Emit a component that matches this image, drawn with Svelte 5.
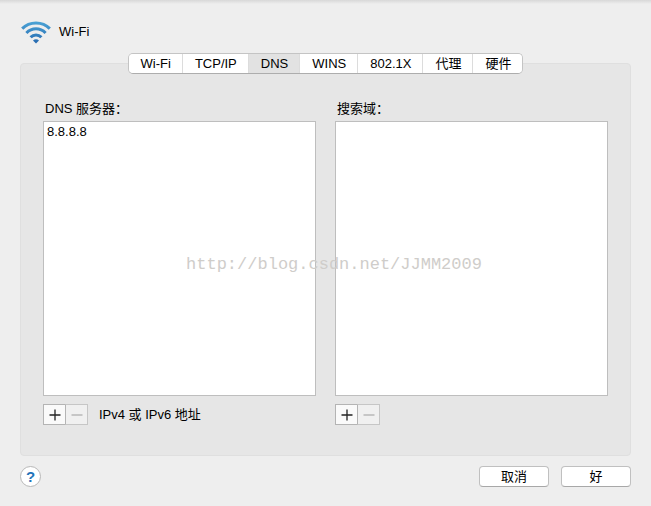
<script>
	const tabs = ['Wi-Fi', 'TCP/IP', 'DNS', 'WINS', '802.1X', '代理', '硬件'];

	let activeTab = $state('DNS');
	let servers = $state(['8.8.8.8']);
	let domains = $state([]);
</script>

{#snippet plus()}
	<svg width="12" height="12" viewBox="0 0 12 12"><path d="M6 0.5V11.5M0.5 6H11.5" stroke="#222" stroke-width="1.3" /></svg>
{/snippet}

{#snippet minus()}
	<svg width="12" height="12" viewBox="0 0 12 12"><path d="M0.5 6H11.5" stroke="#aaa" stroke-width="1.2" /></svg>
{/snippet}

<div class="window">
	<header>
		<svg class="wifi" width="30" height="24" viewBox="0 0 30 24" fill="none">
			<defs>
				<linearGradient id="blue" x1="0" y1="0" x2="0" y2="24" gradientUnits="userSpaceOnUse">
					<stop offset="0" stop-color="#4ea7d8" />
					<stop offset="1" stop-color="#2467ae" />
				</linearGradient>
			</defs>
			<g stroke="url(#blue)" stroke-width="3">
				<path d="M1.2 8.6C8.5 1 21.5 1 28.8 8.6" />
				<path d="M5.4 13C10.8 7.4 19.2 7.4 24.6 13" />
				<path d="M9.6 17.3C12.6 14.2 17.4 14.2 20.4 17.3" />
			</g>
			<path d="M12 20.4C13.7 18.7 16.3 18.7 18 20.4L15 23.6Z" fill="url(#blue)" />
		</svg>
		<h1>Wi-Fi</h1>
	</header>

	<main class="panel">
		<div class="tabs" role="tablist">
			{#each tabs as tab}
				<button
					role="tab"
					aria-selected={activeTab === tab}
					class:active={activeTab === tab}
					onclick={() => (activeTab = tab)}>{tab}</button>
			{/each}
		</div>

		<div class="columns">
			<section>
				<h2 id="dns-label">DNS 服务器：</h2>
				<ul class="list" aria-labelledby="dns-label">
					{#each servers as server}
						<li>{server}</li>
					{/each}
				</ul>
				<div class="actions">
					<button aria-label="添加服务器">{@render plus()}</button>
					<button aria-label="移除服务器" disabled>{@render minus()}</button>
					<span class="hint">IPv4 或 IPv6 地址</span>
				</div>
			</section>

			<section>
				<h2 id="search-label">搜索域：</h2>
				<ul class="list" aria-labelledby="search-label">
					{#each domains as domain}
						<li>{domain}</li>
					{/each}
				</ul>
				<div class="actions">
					<button aria-label="添加搜索域">{@render plus()}</button>
					<button aria-label="移除搜索域" disabled>{@render minus()}</button>
				</div>
			</section>
		</div>
	</main>

	<footer>
		<button class="help" aria-label="帮助">?</button>
		<div class="buttons">
			<button class="push">取消</button>
			<button class="push">好</button>
		</div>
	</footer>

	<div class="watermark">http://blog.csdn.net/JJMM2009</div>
</div>

<style>
	:global(body) {
		margin: 0;
		background: #eeeeee;
	}
	.window {
		position: relative;
		box-sizing: border-box;
		min-height: 100vh;
		padding: 20px 20px 19px;
		display: flex;
		flex-direction: column;
		background: linear-gradient(#d8d8d8, #eeeeee 4px);
		color: #000;
		font-family: 'Liberation Sans', 'Noto Sans CJK SC', sans-serif;
		font-size: 13px;
		line-height: 20px;
	}
	button {
		box-sizing: border-box;
		padding: 0;
		border: none;
		background: #fff;
		color: #000;
		font: inherit;
	}
	h1,
	h2 {
		margin: 0;
		font-size: 13px;
		font-weight: normal;
	}
	header {
		display: flex;
		align-items: center;
		gap: 8px;
		height: 24px;
		padding-left: 1px;
	}
	.panel {
		flex: 1;
		display: flex;
		flex-direction: column;
		margin-top: 19px;
		padding: 0 22px 30px;
		background: #e6e6e6;
		border: 1px solid #dfdfdf;
		border-radius: 4px;
	}
	.tabs {
		align-self: center;
		display: flex;
		margin-top: -11px;
		border: 1px solid #c4c4c4;
		border-bottom-color: #adadad;
		border-radius: 5px;
		overflow: hidden;
	}
	.tabs button {
		height: 19px;
		padding: 0 11px 0 12px;
		border-right: 1px solid #dcdcdc;
	}
	.tabs button:last-child {
		border-right: none;
	}
	.tabs button.active {
		background: #e2e2e2;
	}
	.columns {
		flex: 1;
		display: flex;
		gap: 19px;
		margin-top: 25px;
	}
	section {
		flex: 1;
		display: flex;
		flex-direction: column;
	}
	h2 {
		padding-left: 2px;
		height: 22px;
	}
	.list {
		flex: 1;
		margin: 0;
		padding: 0 3px;
		list-style: none;
		background: #fff;
		border: 1px solid #bebebe;
	}
	.actions {
		display: flex;
		align-items: center;
		margin-top: 8px;
	}
	.actions button {
		display: flex;
		align-items: center;
		justify-content: center;
		width: 23px;
		height: 21px;
		background: #fafafa;
		border: 1px solid #b4b4b4;
	}
	.actions button + button {
		margin-left: -1px;
	}
	.actions button:disabled {
		background: #f0f0f0;
		border-color: #c6c6c6;
		border-left-color: #b4b4b4;
	}
	.hint {
		margin-left: 11px;
	}
	footer {
		display: flex;
		justify-content: space-between;
		align-items: center;
		margin-top: 10px;
	}
	.help {
		width: 21px;
		height: 21px;
		border: 1px solid #b8b8b8;
		border-radius: 50%;
		color: #2273b9;
		font-size: 15px;
		font-weight: bold;
		line-height: 19px;
	}
	.buttons {
		display: flex;
		gap: 12px;
	}
	.push {
		width: 70px;
		height: 21px;
		border: 1px solid #c0c0c0;
		border-bottom-color: #a8a8a8;
		border-radius: 4px;
		line-height: 18px;
	}
	/* stamped over the dialog */
	.watermark {
		position: absolute;
		top: 255px;
		left: 17px;
		right: 0;
		text-align: center;
		color: #cfcdca;
		font-family: 'Liberation Mono', monospace;
		font-size: 17px;
		pointer-events: none;
	}
</style>
